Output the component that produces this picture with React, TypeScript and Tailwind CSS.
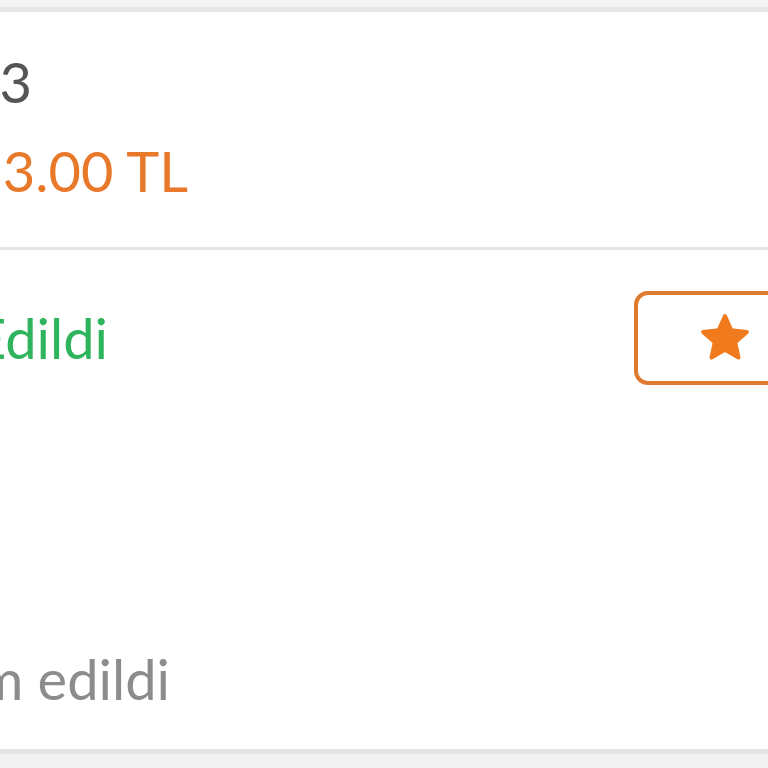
// App.tsx
const Star = () => (
  <svg
    className="block w-[52px] h-[52px] min-w-[52px] shrink-0"
    width="52"
    height="52"
    viewBox="0 0 52 52"
  >
    <path
      d="M26 4 L32.35 18.26 L47.87 19.89 L36.27 30.34 L39.52 45.61 L26 37.8 L12.48 45.61 L15.73 30.34 L4.13 19.89 L19.65 18.26 Z"
      fill="#f07a1c"
      stroke="#f07a1c"
      strokeWidth="4"
      strokeLinejoin="round"
    />
  </svg>
);

const App = () => {
  return (
    <div
      className="w-[768px] h-[768px] overflow-hidden bg-[#f2f2f2] flex flex-col"
      style={{ fontFamily: "Lato, 'Noto Sans', sans-serif" }}
    >
      {/* top strip */}
      <div className="h-[7px] shrink-0 bg-[#f4f4f4]" />
      <div className="h-[5px] shrink-0 bg-[#e7e7e7]" />

      {/* order card */}
      <div className="bg-white shrink-0 pt-[42px] pb-[48px] flex flex-col gap-[33px]">
        <div className="w-[32px] flex justify-end whitespace-nowrap text-[56px] leading-none text-[#555555]">
          Sipariş No: 10023
        </div>
        <div className="w-[188px] flex justify-end whitespace-nowrap text-[56px] leading-none text-[#e8792a]">
          Toplam: 33.00 TL
        </div>
      </div>
      <div className="h-[3px] shrink-0 bg-[#e6e6e6]" />

      {/* status card */}
      <div className="bg-white shrink-0 pt-[41px] pb-[42px] flex flex-col gap-[266px]">
        <div className="flex items-center justify-between">
          <div className="w-[108px] flex justify-end whitespace-nowrap text-[56px] leading-none text-[#2db45c]">
            Teslim Edildi
          </div>
          <div className="w-[182px] h-[94px] shrink-0 -mr-[48px] border-4 border-solid border-[#df7b2f] rounded-[14px] flex items-center justify-center">
            <Star />
          </div>
        </div>
        <div className="w-[170px] flex justify-end whitespace-nowrap text-[56px] leading-none text-[#8c8c8c]">
          Sipariş teslim edildi
        </div>
      </div>
      <div className="h-[5px] shrink-0 bg-[#e4e4e4]" />
    </div>
  );
};

export default App;
